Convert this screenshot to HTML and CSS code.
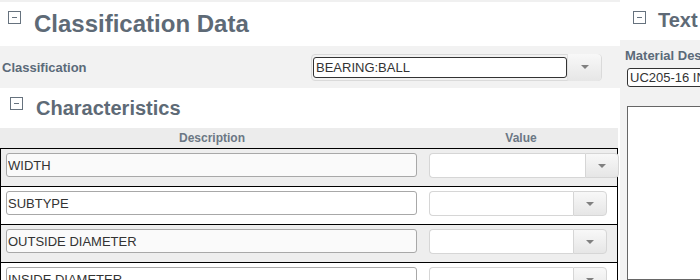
FILE: index.html
```html
<!DOCTYPE html>
<html lang="en">

<head>
    <meta charset="UTF-8">
    <title>Classification Data</title>
    <link rel="stylesheet" href="styles.css">
</head>

<body>

    <div class="page">
        <div class="main">
            <div class="section-head">
                <span class="toggle"></span>
                <h1 class="title">Classification Data</h1>
            </div>

            <div class="field-row">
                <label class="field-label" for="classification">Classification</label>
                <div class="combo combo-dark">
                    <input class="combo-input" id="classification" value="BEARING:BALL">
                    <span class="combo-btn"><span class="caret"></span></span>
                </div>
            </div>

            <div class="section-head sub">
                <span class="toggle"></span>
                <h2 class="title">Characteristics</h2>
            </div>

            <div class="grid">
                <div class="grid-head">
                    <div class="col-desc">Description</div>
                    <div class="col-val">Value</div>
                </div>
                <div class="grid-row alt">
                    <input class="desc-input" value="WIDTH">
                    <div class="combo wide">
                        <input class="combo-input">
                        <span class="combo-btn"><span class="caret"></span></span>
                    </div>
                </div>
                <div class="grid-row">
                    <input class="desc-input" value="SUBTYPE">
                    <div class="combo">
                        <input class="combo-input">
                        <span class="combo-btn"><span class="caret"></span></span>
                    </div>
                </div>
                <div class="grid-row alt">
                    <input class="desc-input" value="OUTSIDE DIAMETER">
                    <div class="combo">
                        <input class="combo-input">
                        <span class="combo-btn"><span class="caret"></span></span>
                    </div>
                </div>
                <div class="grid-row">
                    <input class="desc-input" value="INSIDE DIAMETER">
                    <div class="combo">
                        <input class="combo-input">
                        <span class="combo-btn"><span class="caret"></span></span>
                    </div>
                </div>
            </div>
        </div>

        <div class="side">
            <div class="section-head side-head">
                <span class="toggle"></span>
                <h2 class="title">Text</h2>
            </div>
            <div class="side-body">
                <label class="field-label" for="matdesc">Material Description</label>
                <input class="text-input" id="matdesc" value="UC205-16 INSERT BEARING">
                <textarea class="long-text"></textarea>
            </div>
        </div>
    </div>

</body>

</html>
```

FILE: styles.css
```css
body {
    margin: 0;
    font-family: 'Liberation Sans', Arial, sans-serif;
    background: #fff;
    overflow: hidden;
    height: 280px;
}

.page {
    display: flex;
    width: 1000px;
}

.main {
    width: 620px;
    flex-shrink: 0;
    border-top: 2px solid #f0f0f0;
}

/* section headings */
.section-head {
    display: flex;
    align-items: flex-start;
    height: 44px;
    padding-left: 8px;
}

.toggle {
    position: relative;
    width: 11px;
    height: 11px;
    margin-top: 9px;
    margin-right: 13px;
    border: 1px solid #66727e;
    flex-shrink: 0;
}

.toggle::after {
    content: "";
    position: absolute;
    left: 3px;
    top: 5px;
    width: 5px;
    height: 1px;
    background: #66727e;
}

.title {
    margin: 0;
    font-size: 24px;
    line-height: 44px;
    font-weight: bold;
    color: #5e6a76;
}

.section-head.sub {
    height: 40px;
    padding-left: 10px;
}

.section-head.sub .title {
    font-size: 20px;
    line-height: 40px;
}

/* classification field */
.field-row {
    display: flex;
    align-items: center;
    height: 42px;
    background: #f2f2f2;
    padding-left: 2px;
}

.field-row .field-label {
    width: 309px;
}

.field-label {
    font-size: 13px;
    font-weight: bold;
    color: #5b6a79;
}

/* combo boxes */
.combo {
    display: flex;
    flex-shrink: 0;
    width: 178px;
    height: 25px;
    box-sizing: border-box;
    border-radius: 4px;
}

.combo-input {
    flex: 1;
    min-width: 0;
    box-sizing: border-box;
    height: 100%;
    margin: 0;
    padding: 0 2px;
    border: 1px solid #d6d6d6;
    border-right: none;
    border-radius: 4px 0 0 4px;
    background: #fff;
    font-family: inherit;
    font-size: 13px;
    color: #333;
    outline: none;
}

.combo-btn {
    display: flex;
    align-items: center;
    justify-content: center;
    width: 34px;
    box-sizing: border-box;
    border: 1px solid #d6d6d6;
    border-radius: 0 4px 4px 0;
    background: linear-gradient(#f8f8f8, #e6e6e6);
}

.caret {
    width: 0;
    height: 0;
    border-left: 4px solid transparent;
    border-right: 4px solid transparent;
    border-top: 4px solid #808080;
}

.combo.wide {
    width: 190px;
}

.combo-dark {
    width: 291px;
    height: 27px;
    padding: 1px 0 1px 1px;
    border: 1px solid #dadada;
}

.combo-dark .combo-input {
    height: 21px;
    align-self: center;
    border: 1px solid #333;
    border-radius: 3px;
}

.combo-dark .combo-btn {
    margin: -2px 0 -2px 0;
    border: none;
    border-left: 1px solid #e0e0e0;
}

/* characteristics grid */
.grid {
    width: 618px;
}

.grid-head {
    display: flex;
    height: 20px;
    line-height: 20px;
    background: #ececec;
    font-size: 12px;
    font-weight: bold;
    color: #6b7784;
}

.col-desc {
    width: 424px;
    text-align: center;
}

.col-val {
    flex: 1;
    text-align: center;
}

.grid-row {
    display: flex;
    align-items: flex-start;
    height: 38px;
    padding-top: 4px;
    box-sizing: border-box;
    border-top: 1px solid #000;
    border-left: 1px solid #000;
    border-right: 1px solid #000;
    background: #fff;
}

.grid-row.alt {
    background: #eeeeee;
}

.desc-input {
    flex-shrink: 0;
    width: 411px;
    height: 24px;
    box-sizing: border-box;
    margin: 0 12px 0 5px;
    padding: 0 1px;
    border: 1px solid #a8a8a8;
    border-radius: 3px;
    background: rgba(255, 255, 255, 0.7);
    font-family: inherit;
    font-size: 13px;
    color: #333;
    outline: none;
}

/* right panel */
.side {
    width: 300px;
    flex-shrink: 0;
}

.section-head.side-head {
    height: 40px;
    padding-left: 13px;
}

.side-head .toggle {
    margin-top: 11px;
    margin-right: 12px;
}

.side-head .title {
    font-size: 20px;
    line-height: 40px;
}

.side-body {
    background: #f2f2f2;
    height: 240px;
    padding: 8px 0 0 7px;
    box-sizing: border-box;
    display: flex;
    flex-direction: column;
    align-items: flex-start;
}

.side-body .field-label {
    line-height: 16px;
    margin-left: -2px;
}

.text-input {
    width: 260px;
    height: 21px;
    box-sizing: border-box;
    margin-top: 4px;
    padding: 0 2px;
    border: 1px solid #333;
    border-radius: 3px;
    font-family: inherit;
    font-size: 13px;
    color: #333;
    outline: none;
}

.long-text {
    width: 260px;
    height: 200px;
    box-sizing: border-box;
    margin: 19px 0 0;
    border: 1px solid #666;
    background: #fff;
    resize: none;
}
```
